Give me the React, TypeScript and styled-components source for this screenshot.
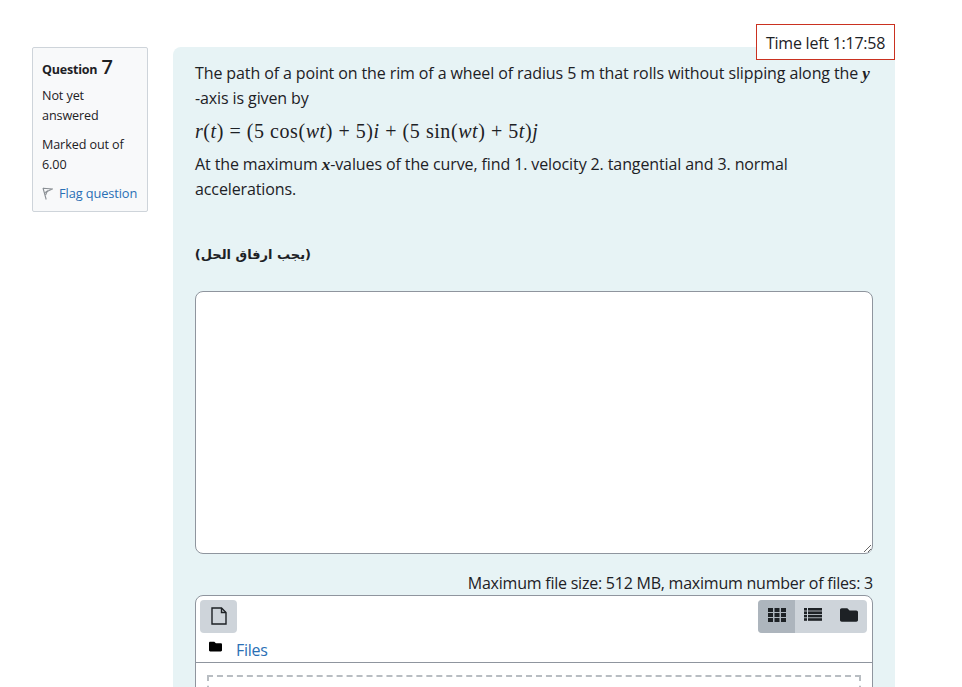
import React from "react";
import styled, { createGlobalStyle } from "styled-components";
import { FaFolder } from "react-icons/fa";

const Global = createGlobalStyle`
  html, body { margin: 0; padding: 0; height: 687px; overflow: hidden; background: #fff; }
  body { font-family: "Open Sans", "Noto Sans", sans-serif; color: #1d2125; }
`;

const Page = styled.div`
  position: relative;
  display: flex;
  align-items: flex-start;
  gap: 25px;
  padding: 47px 0 0 32px;
  width: 930px;
  height: 640px;
  overflow: hidden;
`;

const Timer = styled.div`
  position: absolute;
  left: 756px;
  top: 24px;
  box-sizing: border-box;
  width: 139px;
  height: 36px;
  border: 1px solid #ca3120;
  background: #fff;
  font-size: 16px;
  letter-spacing: -0.24px;
  line-height: 37px;
  padding-left: 9px;
  white-space: nowrap;
  z-index: 2;
`;

const Info = styled.aside`
  box-sizing: border-box;
  flex: 0 0 116px;
  height: 165px;
  padding: 9px;
  background: #f8f9fa;
  border: 1px solid #ced4da;
  border-radius: 2px;
  font-size: 12.6px;
  letter-spacing: -0.1px;
  line-height: 20px;
`;

const QTitle = styled.h3`
  margin: 0 0 6px;
  font-size: 12.5px;
  font-weight: 700;
  line-height: 20px;
  letter-spacing: -0.2px;
`;

const QNo = styled.span`
  font-size: 20px;
  font-weight: 600;
  margin-left: 1px;
`;

const State = styled.div`
  margin-bottom: 9px;
`;

const Flag = styled.a`
  display: flex;
  align-items: center;
  gap: 6px;
  margin-top: -1px;
  color: #2a6fb5;
  font-size: 12.8px;
  letter-spacing: -0.1px;
  white-space: nowrap;
`;

const Content = styled.main`
  box-sizing: border-box;
  flex: 0 0 722px;
  height: 640px;
  padding: 14px 22px 0;
  background: #e7f3f5;
  border-radius: 8px 0 0 0;
  overflow: hidden;
`;

const Para = styled.p`
  margin: 0;
  font-size: 16px;
  letter-spacing: -0.11px;
  line-height: 24.5px;
`;

const MathVar = styled.i`
  font-family: "Liberation Serif", serif;
  font-weight: 700;
  font-size: 17px;
  letter-spacing: 0;
  line-height: 0;
`;

const MathLine = styled.p`
  margin: 8px 0 8px;
  font-family: "Liberation Serif", serif;
  font-size: 20px;
  line-height: 26px;
  letter-spacing: 0.55px;
  white-space: nowrap;
  i { font-style: italic; }
`;

const Arabic = styled.p`
  margin: 42px 0 24px;
  font-family: "DejaVu Sans", sans-serif;
  font-size: 13px;
  font-weight: 700;
  line-height: 24px;
  width: 116px;
  white-space: nowrap;
`;

const Answer = styled.textarea`
  display: block;
  box-sizing: border-box;
  width: 678px;
  height: 263px;
  margin: 0;
  padding: 6px 12px;
  background: #fff;
  border: 1px solid #8f959e;
  border-radius: 8px;
  outline: none;
  resize: vertical;
`;

const Limit = styled.div`
  margin-top: 18px;
  text-align: right;
  font-size: 16px;
  letter-spacing: -0.23px;
  line-height: 23px;
`;

const Picker = styled.section`
  box-sizing: border-box;
  width: 678px;
  height: 120px;
  background: #fff;
  border: 1px solid #8f959e;
  border-radius: 8px 8px 0 0;
`;

const Toolbar = styled.div`
  display: flex;
  justify-content: space-between;
  padding: 4px 5px 0 4px;
`;

const ToolButton = styled.div`
  box-sizing: border-box;
  width: 37px;
  height: 33px;
  padding-bottom: 2px;
  display: flex;
  align-items: center;
  justify-content: center;
  background: #ced4da;
  border-radius: 4px;
  color: #1d2125;
`;

const ViewGroup = styled.div`
  display: flex;
  width: 109px;
  height: 33px;
  border-radius: 4px;
  overflow: hidden;
  background: #ced4da;
  color: #1d2125;
`;

const ViewButton = styled.div<{ $active?: boolean; $w: number }>`
  box-sizing: border-box;
  width: ${(p) => p.$w}px;
  padding-bottom: 3px;
  display: flex;
  align-items: center;
  justify-content: center;
  font-size: 18px;
  background: ${(p) => (p.$active ? "#adb5bd" : "transparent")};
`;

const Path = styled.div`
  box-sizing: border-box;
  height: 30px;
  display: flex;
  align-items: center;
  padding: 4px 0 0 13px;
  border-bottom: 1px solid #8f959e;
  font-size: 16px;
  letter-spacing: -0.25px;
  color: #2a6fb5;
  gap: 14px;
  svg { color: #000; font-size: 13px; position: relative; top: -3px; }
`;

const Drop = styled.div`
  box-sizing: border-box;
  margin: 12px 11px 0;
  height: 60px;
  border: 2px dashed #b8bdc2;
  border-bottom: 0;
`;

const gridCells = [0, 1, 2].flatMap((r) =>
  [0, 1, 2].map((c) => ({ x: c * 6.5, y: r * 5, key: `${r}-${c}` }))
);

export default function App() {
  return (
    <>
      <Global />
      <Page>
        <Timer>Time left 1:17:58</Timer>
        <Info>
          <QTitle>
            Question <QNo>7</QNo>
          </QTitle>
          <State>
            Not yet
            <br />
            answered
          </State>
          <State>
            Marked out of
            <br />
            6.00
          </State>
          <Flag>
            <svg width="11" height="13" viewBox="0 0 11 13" fill="none" stroke="#8a8f94" strokeWidth="1.1">
              <path d="M1 1 4.2 12.5M1 1.2 10.3 2 3 5.6" />
              <path d="M5.5 3.5 3.6 8" />
            </svg>
            Flag question
          </Flag>
        </Info>
        <Content>
          <Para>
            The path of a point on the rim of a wheel of radius 5 m that rolls without slipping along the <MathVar>y</MathVar>
            <br />
            -axis is given by
          </Para>
          <MathLine>
            <i>r</i>(<i>t</i>) = (5 cos(<i>wt</i>) + 5)<i>i</i> + (5 sin(<i>wt</i>) + 5<i>t</i>)<i>j</i>
          </MathLine>
          <Para>
            At the maximum <MathVar>x</MathVar>-values of the curve, find 1. velocity 2. tangential and 3. normal
            <br />
            accelerations.
          </Para>
          <Arabic dir="rtl">(يجب ارفاق الحل)</Arabic>
          <Answer readOnly aria-label="Answer" />
          <Limit>Maximum file size: 512 MB, maximum number of files: 3</Limit>
          <Picker>
            <Toolbar>
              <ToolButton>
                <svg width="16" height="18" viewBox="0 0 16 18" fill="none" stroke="#1d2125" strokeWidth="1.4">
                  <path d="M1 1h9.5L15 5.5V17H1z" />
                  <path d="M10.5 1v4.5H15" />
                </svg>
              </ToolButton>
              <ViewGroup>
                <ViewButton $active $w={37}>
                  <svg width="18" height="14" viewBox="0 0 18 14" fill="#1d2125">
                    {gridCells.map((c) => (
                      <rect key={c.key} x={c.x} y={c.y} width="5" height="4" />
                    ))}
                  </svg>
                </ViewButton>
                <ViewButton $w={36}>
                  <svg width="18" height="14" viewBox="0 0 18 14" fill="#1d2125">
                    {[0, 3.4, 6.8, 10.2].map((y) => (
                      <g key={y}>
                        <rect x="0" y={y} width="3" height="2.6" />
                        <rect x="4" y={y} width="14" height="2.6" />
                      </g>
                    ))}
                  </svg>
                </ViewButton>
                <ViewButton $w={36}>
                  <FaFolder />
                </ViewButton>
              </ViewGroup>
            </Toolbar>
            <Path>
              <FaFolder />
              Files
            </Path>
            <Drop />
          </Picker>
        </Content>
      </Page>
    </>
  );
}
